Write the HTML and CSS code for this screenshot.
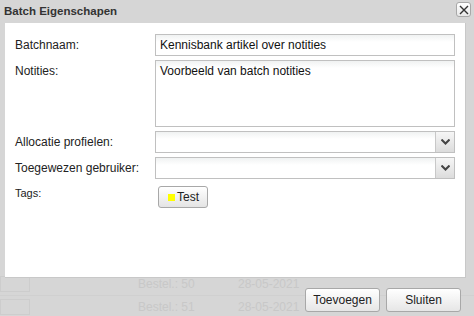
FILE: index.html
```html
<!DOCTYPE html>
<html lang="nl">
<head>
  <meta charset="UTF-8">
  <title>Batch Eigenschapen</title>
  <link rel="stylesheet" href="styles.css">
</head>
<body>
  <!-- page behind the dialog -->
  <div class="page">
    <div class="row-gap"></div>
    <div class="row"><span class="ghost-cell"></span><span class="ghost-no">Bestel.: 50</span><span class="ghost-date">28-05-2021</span></div>
    <div class="row"><span class="ghost-cell"></span><span class="ghost-no">Bestel.: 51</span><span class="ghost-date">28-05-2021</span></div>
  </div>

  <div class="dialog">
    <div class="titlebar">
      <span class="title">Batch Eigenschapen</span>
      <button class="close" title="Sluiten">
        <svg width="10" height="10" viewBox="0 0 10 10"><path d="M1 1L9 9M9 1L1 9" stroke="#333" stroke-width="1.4"/></svg>
      </button>
    </div>

    <div class="content">
      <div class="form">
        <label class="lbl">Batchnaam:</label>
        <div class="field input">Kennisbank artikel over notities</div>

        <label class="lbl">Notities:</label>
        <div class="field textarea">Voorbeeld van batch notities</div>

        <label class="lbl">Allocatie profielen:</label>
        <div class="field select"><span class="sel-val"></span><span class="arrow"><svg width="9" height="6" viewBox="0 0 9 6"><path d="M0.5 0.5L4.5 4.5L8.5 0.5" stroke="#444" stroke-width="2" fill="none"/></svg></span></div>

        <label class="lbl">Toegewezen gebruiker:</label>
        <div class="field select"><span class="sel-val"></span><span class="arrow"><svg width="9" height="6" viewBox="0 0 9 6"><path d="M0.5 0.5L4.5 4.5L8.5 0.5" stroke="#444" stroke-width="2" fill="none"/></svg></span></div>

        <label class="lbl small">Tags:</label>
        <div class="tags">
          <button class="tag"><span class="swatch"></span>Test</button>
        </div>
      </div>
    </div>

    <div class="buttons">
      <button class="btn">Toevoegen</button>
      <button class="btn">Sluiten</button>
    </div>
  </div>
</body>
</html>
```

FILE: styles.css
```css
body {
  margin: 0;
  width: 474px;
  height: 316px;
  overflow: hidden;
  background: #d6d6d6;
  font-family: 'Liberation Sans', Arial, sans-serif;
  position: relative;
}

/* faded page under the overlay */
.page {
  color: #c8c8c8;
  font-size: 12px;
}
.row {
  display: flex;
  align-items: center;
  height: 22px;
  border-bottom: 1px solid #d0d0d0;
}
.row-gap {
  height: 273px;
}
.ghost-cell {
  width: 28px;
  height: 14px;
  border: 1px solid #cdcdcd;
  margin-right: 108px;
}
.ghost-no {
  width: 100px;
}

.dialog {
  position: absolute;
  inset: 0;
  display: flex;
  flex-direction: column;
}
.titlebar {
  height: 23px;
  display: flex;
  align-items: center;
  justify-content: space-between;
  padding: 0 3px 0 4px;
  box-sizing: border-box;
}
.title {
  font-weight: bold;
  font-size: 11.5px;
  color: #333;
  margin-top: -2px;
}
.close {
  width: 15px;
  height: 15px;
  padding: 0;
  margin-top: -4px;
  display: flex;
  align-items: center;
  justify-content: center;
  background: linear-gradient(#fff, #e8e8e8);
  border: 1px solid #a8a8a8;
  border-radius: 3px;
}

.content {
  background: #fff;
  margin: 0 8px 0 5px;
  height: 255px;
  padding: 11px 10px 0 10px;
  box-sizing: border-box;
  border-right: 1px solid #c8c8c8;
  border-bottom: 1px solid #c8c8c8;
}
.form {
  display: grid;
  grid-template-columns: 140px 1fr;
  row-gap: 4px;
  font-size: 12px;
  color: #222;
}
.lbl {
  padding-top: 4px;
  line-height: 14px;
}
.lbl.small {
  font-size: 11px;
  padding-top: 0;
  margin-top: 3px;
}
.field {
  border: 1px solid #c0c0c0;
  background: linear-gradient(#f0f2f2, #fff 7px);
  box-sizing: border-box;
  padding: 3px 4px;
  line-height: 14px;
  color: #111;
}
.input {
  height: 22px;
}
.textarea {
  height: 67px;
}
.select {
  height: 22px;
  padding: 0;
  display: flex;
  justify-content: space-between;
}
.arrow {
  width: 18px;
  border-left: 1px solid #c8c8c8;
  background: linear-gradient(#f6f6f6, #dcdcdc);
  display: flex;
  align-items: center;
  justify-content: center;
}
.tags {
  padding: 3px 0 0 3px;
}
.tag {
  display: flex;
  align-items: center;
  gap: 2px;
  height: 22px;
  width: 50px;
  padding: 0 0 0 9px;
  font-family: 'Liberation Sans', Arial, sans-serif;
  font-size: 12px;
  color: #222;
  background: linear-gradient(#fff, #e4e4e4);
  border: 1px solid #a8a8a8;
  border-radius: 3px;
}
.swatch {
  width: 7px;
  height: 7px;
  background: #ffff00;
}

.buttons {
  display: flex;
  justify-content: flex-end;
  gap: 6px;
  padding: 10px 13px 0 0;
}
.btn {
  width: 75px;
  height: 24px;
  font-family: 'Liberation Sans', Arial, sans-serif;
  font-size: 12px;
  color: #222;
  background: linear-gradient(#fff, #e6e6e6);
  border: 1px solid #a8a8a8;
  border-radius: 3px;
  padding: 0;
}
```
